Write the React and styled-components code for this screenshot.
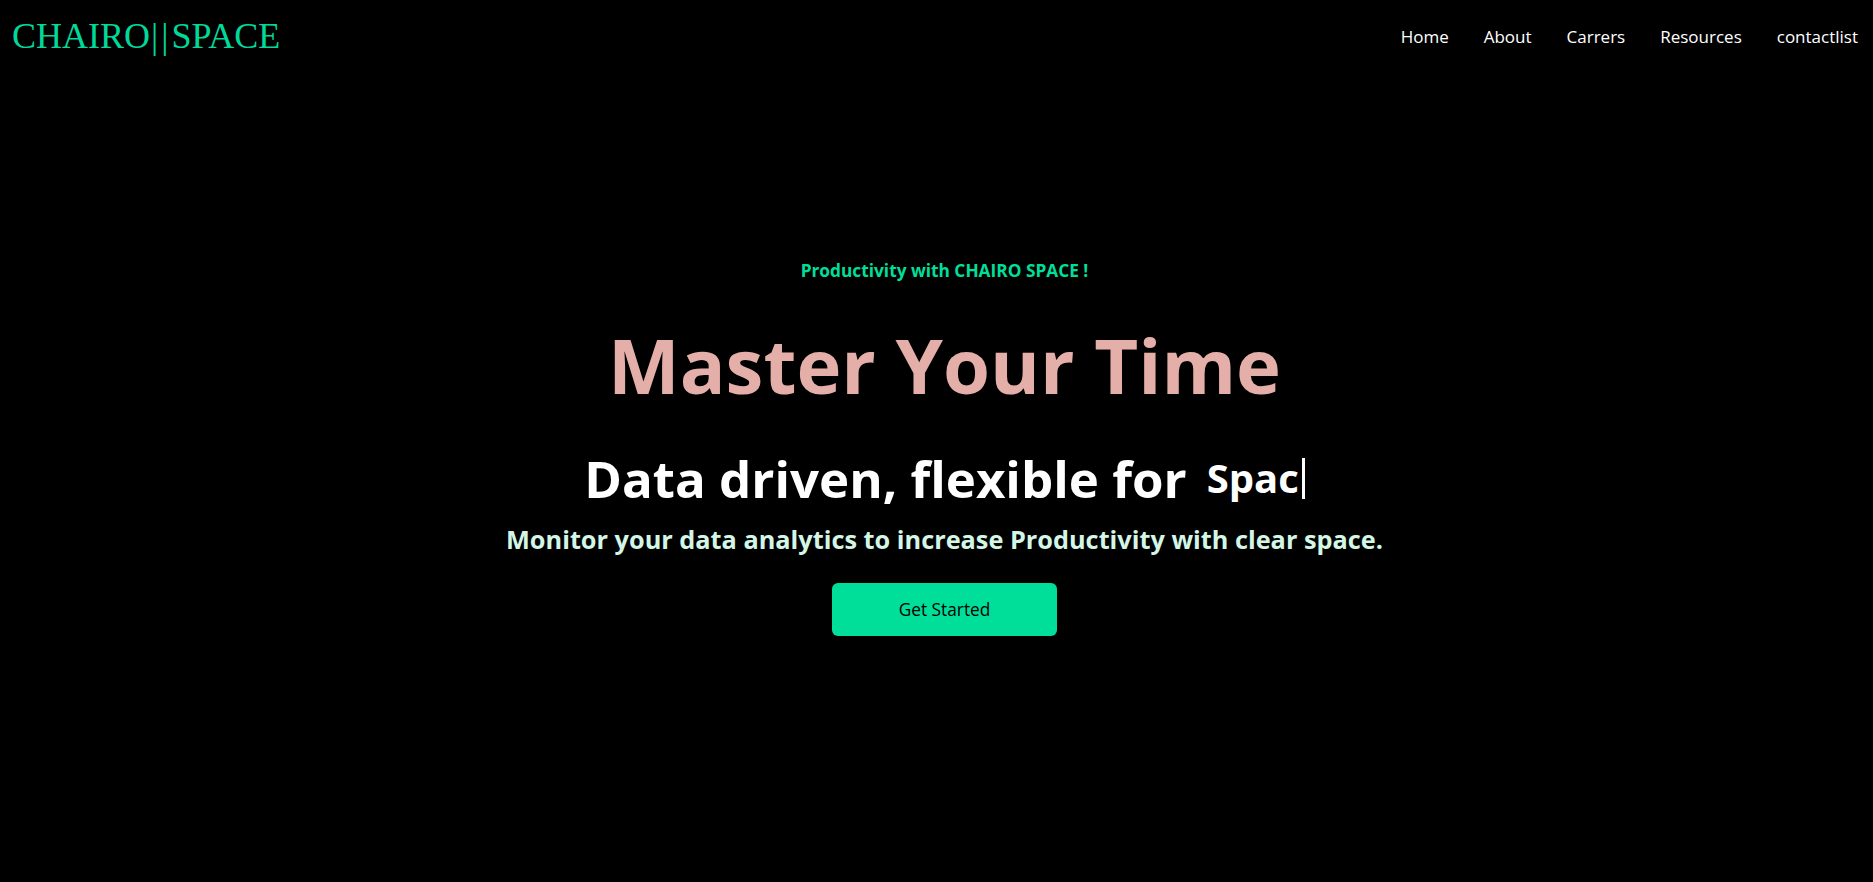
import React from 'react'
import styled, { createGlobalStyle } from 'styled-components'

const GlobalStyle = createGlobalStyle`
    html, body {
        margin: 0;
        padding: 0;
        background: #000;
    }
    body {
        font-family: "Open Sans", "Noto Sans", sans-serif;
        color: #fff;
    }
`

const links = ['Home', 'About', 'Carrers', 'Resources', 'contactlist']

function App() {
    return (
        <>
            <GlobalStyle />
            <Page>
                <Header>
                    <Logo>
                        CHAIRO<Bar>|</Bar><Bar $last>|</Bar>SPACE
                    </Logo>
                    <Nav>
                        {links.map((l) => (
                            <NavItem key={l}>{l}</NavItem>
                        ))}
                    </Nav>
                </Header>
                <Hero>
                    <Tagline>Productivity with CHAIRO SPACE !</Tagline>
                    <Title>Master Your Time</Title>
                    <SubTitle>
                        Data driven, flexible for
                        <Typed>Spac</Typed>
                        <Cursor />
                    </SubTitle>
                    <Lead>Monitor your data analytics to increase Productivity with clear space.</Lead>
                    <StartButton>Get Started</StartButton>
                </Hero>
            </Page>
        </>
    )
}

export default App

const Page = styled.div`
    width: 100%;
    min-height: 882px;
    background: #000;
`

const Header = styled.header`
    display: flex;
    justify-content: space-between;
    align-items: flex-start;
    height: 72px;
    padding: 0 15px 0 12px;
`

const Logo = styled.h1`
    margin: 0;
    padding-top: 18px;
    font-family: "Liberation Serif", "Times New Roman", serif;
    font-weight: 400;
    font-size: 36px;
    line-height: 36px;
    color: #00d99a;
`

const Bar = styled.span`
    margin: ${(p) => (p.$last ? '0 3px 0 0' : '0 3px 0 1px')};
`

const Nav = styled.ul`
    display: flex;
    gap: 35px;
    margin: 0;
    padding: 25px 0 0;
    list-style: none;
`

const NavItem = styled.li`
    font-size: 17px;
    line-height: 24px;
    color: #fff;
`

const Hero = styled.main`
    display: flex;
    flex-direction: column;
    align-items: center;
    text-align: center;
    padding: 185px 0 0 16px;
`

const Tagline = styled.p`
    margin: 0;
    font-size: 17.3px;
    line-height: 28px;
    font-weight: 700;
    color: #00df9a;
`

const Title = styled.h1`
    margin: 38px 0 0;
    font-size: 76px;
    line-height: 84px;
    font-weight: 700;
    color: #e4aea9;
`

const SubTitle = styled.div`
    display: flex;
    align-items: center;
    margin-top: 43px;
    font-size: 51px;
    line-height: 56px;
    font-weight: 700;
    color: #fff;
`

const Typed = styled.span`
    margin-left: 20px;
    font-size: 40px;
    font-weight: 700;
`

const Cursor = styled.span`
    display: inline-block;
    width: 3px;
    height: 41px;
    margin-left: 3px;
    background: #fff;
`

const Lead = styled.p`
    margin: 17px 0 0;
    font-size: 25.3px;
    line-height: 32px;
    font-weight: 700;
    color: #d3f6e6;
`

const StartButton = styled.button`
    width: 225px;
    height: 53px;
    margin-top: 28px;
    border: none;
    border-radius: 6px;
    background: #00df9a;
    color: #000;
    font-family: "Open Sans", "Noto Sans", sans-serif;
    font-size: 17.3px;
    font-weight: 500;
    cursor: pointer;
`
